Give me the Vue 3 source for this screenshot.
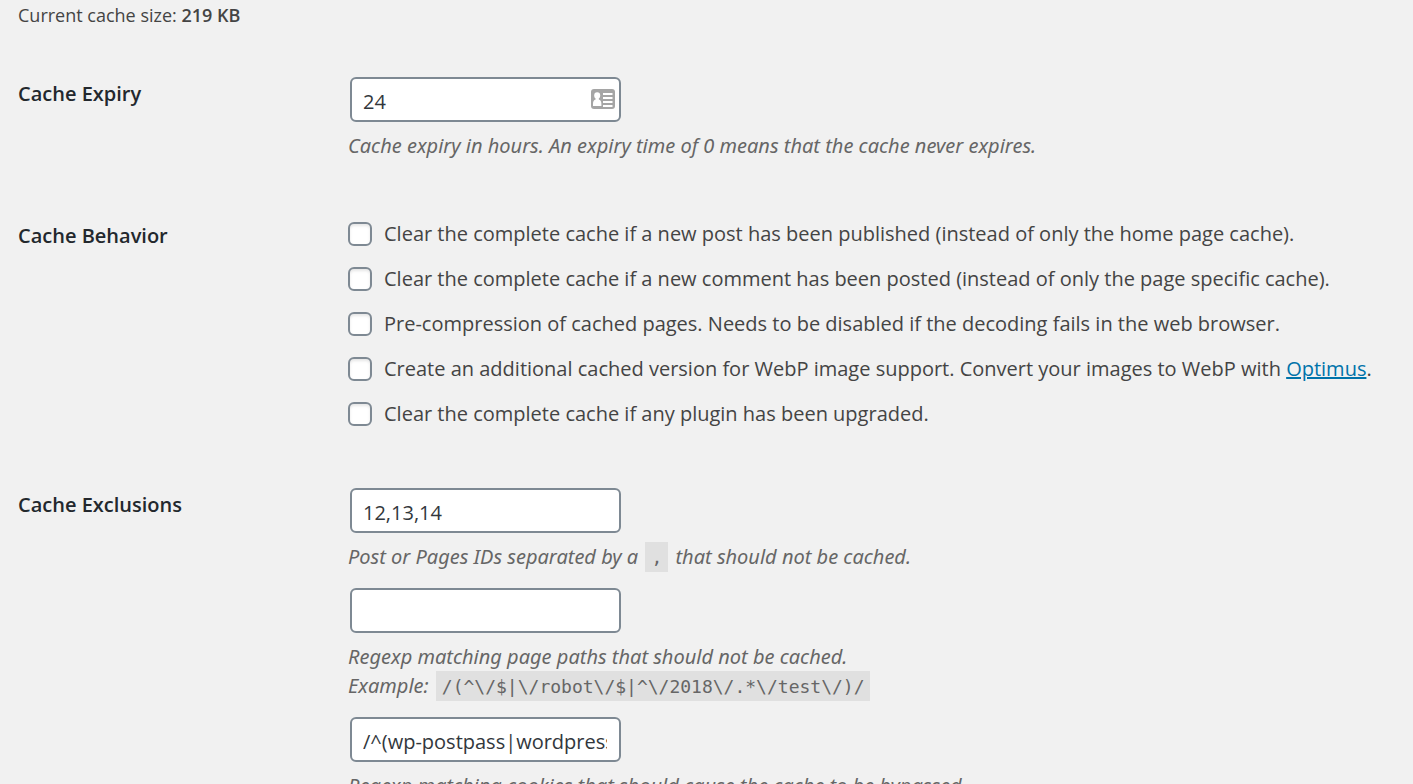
<template>
  <form class="cache-settings" @submit.prevent>
    <p class="cache-size">Current cache size: <strong>219 KB</strong></p>

    <div class="setting-row">
      <h2><label for="expires">Cache Expiry</label></h2>
      <div class="setting-body">
        <div class="field">
          <div class="input-wrap">
            <input id="expires" v-model="expires" type="text" class="text-input with-icon" />
            <svg class="card-icon" viewBox="0 0 24 20" aria-hidden="true">
              <rect width="24" height="20" rx="3" fill="#a5a5a5" />
              <ellipse cx="6.200" cy="6.500" rx="3" ry="3.300" fill="#fff" />
              <path d="M4.600 8h3.200v2.500c1.800.6 2.600 2 2.600 4.500v2H2v-2c0-2.500.8-3.900 2.600-4.500z" fill="#fff" />
              <path d="M12 5h9.500M12 9h9.500M12 13h9.500M12 17h9.500" stroke="#fff" stroke-width="2" />
            </svg>
          </div>
          <p class="description">Cache expiry in hours. An expiry time of 0 means that the cache never expires.</p>
        </div>
      </div>
    </div>

    <div class="setting-row">
      <h2 id="behavior">Cache Behavior</h2>
      <div class="setting-body behavior-list" role="group" aria-labelledby="behavior">
        <label v-for="option in options" :key="option.id" class="check-label">
          <input v-model="option.checked" type="checkbox" />
          <span>{{ option.text }}<template v-if="option.link">{{ ' ' }}<a href="#">{{ option.link }}</a>.</template></span>
        </label>
      </div>
    </div>

    <div class="setting-row">
      <h2 id="exclusions">Cache Exclusions</h2>
      <div class="setting-body" role="group" aria-labelledby="exclusions">
        <div class="field">
          <input v-model="excludedIds" type="text" class="text-input" aria-describedby="ids-help" aria-labelledby="exclusions" />
          <p id="ids-help" class="description">Post or Pages IDs separated by a <code>,</code> that should not be cached.</p>
        </div>
        <div class="field">
          <input v-model="excludedPaths" type="text" class="text-input" aria-describedby="paths-help" aria-labelledby="exclusions" />
          <p id="paths-help" class="description">
            Regexp matching page paths that should not be cached.<br />
            Example: <code>{{ pathExample }}</code>
          </p>
        </div>
        <div class="field">
          <input v-model="excludedCookies" type="text" class="text-input" aria-describedby="cookies-help" aria-labelledby="exclusions" />
          <p id="cookies-help" class="description">Regexp matching cookies that should cause the cache to be bypassed.</p>
        </div>
      </div>
    </div>
  </form>
</template>

<script setup>
import { ref } from "vue";

const expires = ref("24");
const excludedIds = ref("12,13,14");
const excludedPaths = ref("");
const excludedCookies = ref("/^(wp-postpass|wordpress_logged_in|comment_author)_/");

const pathExample = "/(^\\/$|\\/robot\\/$|^\\/2018\\/.*\\/test\\/)/";

// Cache behavior checkboxes
const options = ref([
  { id: 1, text: "Clear the complete cache if a new post has been published (instead of only the home page cache).", checked: false },
  { id: 2, text: "Clear the complete cache if a new comment has been posted (instead of only the page specific cache).", checked: false },
  { id: 3, text: "Pre-compression of cached pages. Needs to be disabled if the decoding fails in the web browser.", checked: false },
  { id: 4, text: "Create an additional cached version for WebP image support. Convert your images to WebP with", link: "Optimus", checked: false },
  { id: 5, text: "Clear the complete cache if any plugin has been upgraded.", checked: false },
]);
</script>

<style>
body {
  background: #f1f1f1;
}
</style>

<style scoped>
.cache-settings {
  padding: 0 18px;
  color: #444;
  font-family: "Open Sans", "Noto Sans", sans-serif;
  font-size: 20px;
  line-height: 29px;
}

.cache-size {
  margin: 0 0 47px;
  font-size: 18px;
  line-height: 30px;
}

.cache-size strong {
  font-weight: 600;
}

.setting-row {
  display: grid;
  grid-template-columns: 330px 1fr;
  margin-bottom: 59px;
}

.setting-row h2 {
  margin: 0;
  padding-top: 2px;
  color: #23282d;
  font-size: 20px;
  font-weight: 600;
  line-height: 30px;
}

.setting-body {
  display: flex;
  flex-direction: column;
  gap: 17px;
}

.input-wrap {
  position: relative;
  width: 275px;
}

.text-input {
  display: block;
  box-sizing: border-box;
  width: 271px;
  height: 45px;
  margin: 0 2px;
  padding: 3px 12px 0 11px;
  border: 2px solid #7e8993;
  border-radius: 6px;
  background: #fff;
  color: #32373c;
  font-family: inherit;
  font-size: 20px;
}

.with-icon {
  padding-right: 36px;
}

.card-icon {
  position: absolute;
  top: 12px;
  right: 8px;
  width: 24px;
  height: 20px;
}

.description {
  margin: 9px 0 0;
  color: #666;
  font-family: "Noto Sans", "Open Sans", sans-serif;
  font-style: italic;
}

/* code keeps an upright face inside the italic description */
code {
  margin: 0 2px;
  padding: 5px 6px 4px;
  background: #e0e0e0;
  font-family: "DejaVu Sans Mono", monospace;
  font-size: 18px;
  font-style: normal;
  line-height: 20px;
}

.behavior-list {
  gap: 15px;
  line-height: 30px;
}

.check-label {
  display: flex;
  align-items: center;
  gap: 12px;
}

.check-label input {
  flex: none;
  width: 24px;
  height: 24px;
  margin: 0;
  appearance: none;
  border: 2px solid #7e8993;
  border-radius: 6px;
  background: #fff;
  box-shadow: inset 0 2px 3px rgba(0, 0, 0, 0.1);
}

.check-label input:checked {
  background: #007cba;
}

a {
  color: #0073aa;
  text-decoration-thickness: 2px;
}
</style>
